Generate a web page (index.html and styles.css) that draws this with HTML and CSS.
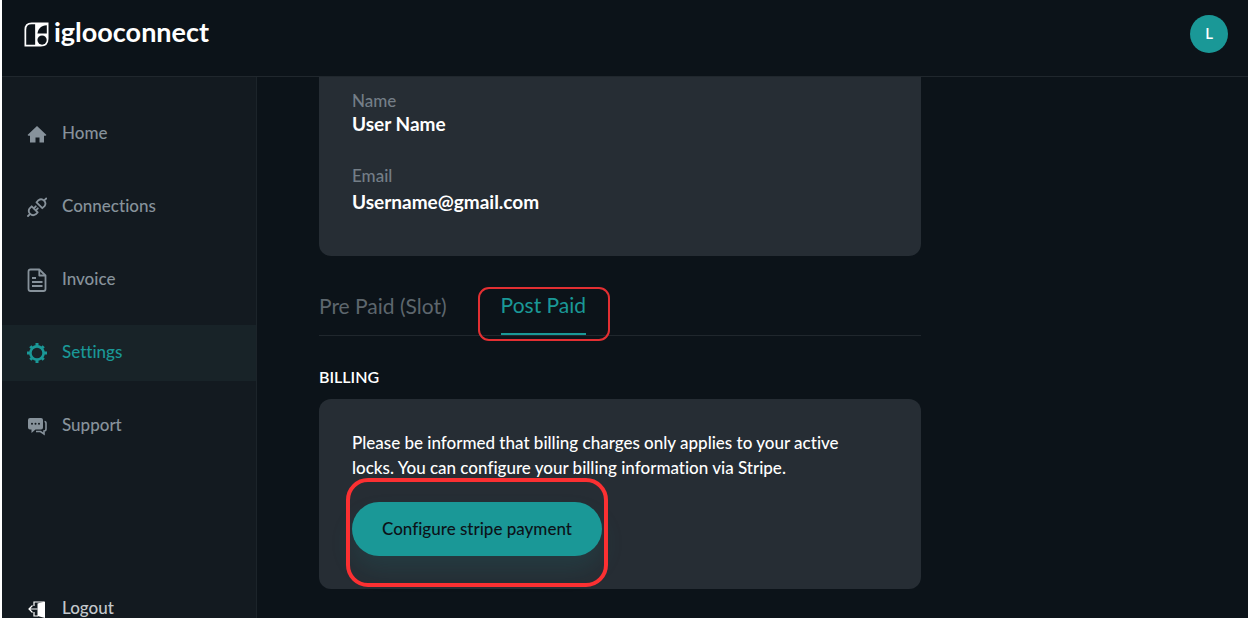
FILE: index.html
```html
<!DOCTYPE html>
<html lang="en">
<head>
<meta charset="utf-8">
<title>iglooconnect – Settings</title>
<link rel="stylesheet" href="styles.css">
</head>
<body>
<header class="topbar">
  <a class="brand" href="#">
    <svg class="brand-mark" viewBox="0 0 26 26" aria-hidden="true">
      <path d="M8 .5H25.500V17.500Q25.500 25.500 17.500 25.500H.5V8Q.5.5 8 .5z" fill="#fff"/>
      <path d="M8 2.300h3.600v21.400H2.300V8Q2.300 2.300 8 2.300z" fill="#0c1319"/>
      <path d="M23.700 3.400v8.600h-9.700C14.700 7 17.500 4 23.700 3.400z" fill="#0c1319"/>
      <circle cx="18.800" cy="18.800" r="4.800" fill="#0c1319"/>
    </svg>
    <span class="brand-name">iglooconnect</span>
  </a>
  <button class="avatar" type="button" aria-label="Account L">L</button>
</header>
<div class="layout">
  <nav class="sidebar" aria-label="Main">
    <a class="nav-item" href="#">
      <svg class="icon" viewBox="0 0 20 24" aria-hidden="true"><path d="M10 4 19.500 13l-1 .8H17V20.500h-4.500v-5h-4v5H3v-6.700H1.500L.5 13z" fill="currentColor"/></svg>
      <span>Home</span>
    </a>
    <a class="nav-item" href="#">
      <svg class="icon" viewBox="0 0 20 24" aria-hidden="true"><g fill="none" stroke="currentColor" stroke-width="1.800" stroke-linecap="round" stroke-linejoin="round"><path d="M9.500 7.300 11.500 5.200a4.300 4.300 0 0 1 6 6L15.300 13.200z"/><path d="m17.500 5.200 1.700-1.700"/><path d="M4.700 11.300 2.700 13.300a4.300 4.300 0 0 0 6 6l2-2z"/><path d="M2.700 19.300 1 21M6.800 13.300l2-2M8.800 15.300l2-2"/></g></svg>
      <span>Connections</span>
    </a>
    <a class="nav-item" href="#">
      <svg class="icon" viewBox="0 0 20 24" aria-hidden="true"><g fill="none" stroke="currentColor" stroke-width="1.800" stroke-linejoin="round"><path d="M3.500 1.500h8.800l6.200 6V21q0 2-2 2h-13q-2 0-2-2V3.500q0-2 2-2z"/><path d="M12.300 2v5.500H18M5 10h4M5 14h10.500M5 18h10.500"/></g></svg>
      <span>Invoice</span>
    </a>
    <a class="nav-item nav-item-active" href="#" aria-current="page">
      <svg class="icon" viewBox="0 0 20 24" aria-hidden="true"><circle cx="10" cy="12" r="6.600" fill="none" stroke="currentColor" stroke-width="2.600"/><path d="M10 2v3.200M10 18.800V22M0 12h3.200M16.800 12H20M3.300 5.300l2 2M14.700 16.700l2 2M16.700 5.300l-2 2M5.300 16.700l-2 2" fill="none" stroke="currentColor" stroke-width="3"/></svg>
      <span>Settings</span>
    </a>
    <a class="nav-item" href="#">
      <svg class="icon" viewBox="0 0 20 24" aria-hidden="true"><path d="M3 4h11q2 0 2 2v7.500q0 2-2 2H8.500L4.500 19v-3.500H3q-2 0-2-2V6q0-2 2-2z" fill="currentColor"/><path d="M17.500 7.500q1.500 0 1.500 2V15q0 2-2 2v3l-3.500-2.500H9" fill="none" stroke="currentColor" stroke-width="1.600"/><g fill="#131a20"><circle cx="5" cy="9.700" r="1"/><circle cx="8.500" cy="9.700" r="1"/><circle cx="12" cy="9.700" r="1"/></g></svg>
      <span>Support</span>
    </a>
    <a class="nav-item nav-item-logout" href="#">
      <svg class="icon" viewBox="0 0 20 24" aria-hidden="true"><path d="m10.500 6.500 7.500-2V21l-7.500-2z" fill="#fff"/><path d="M7 9V5h10M7 15v4h4M10.500 12H2.500M5.500 8.500 2 12l3.500 3.500" fill="none" stroke="#fff" stroke-width="1.200"/></svg>
      <span>Logout</span>
    </a>
  </nav>
  <main class="content">
    <section class="card profile" aria-label="Profile">
      <dl class="details">
        <div class="detail"><dt>Name</dt><dd>User Name</dd></div>
        <div class="detail detail-email"><dt>Email</dt><dd>Username@gmail.com</dd></div>
      </dl>
    </section>
    <div class="tabs" role="tablist">
      <button class="tab" type="button" role="tab" aria-selected="false">Pre Paid (Slot)</button>
      <button class="tab tab-active" type="button" role="tab" aria-selected="true">Post Paid</button>
    </div>
    <h2 class="section-title">BILLING</h2>
    <section class="card billing">
      <p class="billing-text">Please be informed that billing charges only applies to your active locks. You can configure your billing information via Stripe.</p>
      <button class="primary" type="button">Configure stripe payment</button>
    </section>
  </main>
</div>
</body>
</html>
```

FILE: styles.css
```css
* {
  box-sizing: border-box;
}

body {
  display: flex;
  flex-direction: column;
  height: 100vh;
  margin: 0;
  overflow: hidden;
  border-left: 2px solid #fff;
  background: #0c1319;
  color: #fff;
  font-family: Lato, "Open Sans", sans-serif;
  font-size: 17px;
  font-weight: 500;
  font-variant-ligatures: none;
}

a {
  color: inherit;
  text-decoration: none;
}

button {
  padding: 0;
  border: 0;
  background: none;
  color: inherit;
  font: inherit;
  font-variant-ligatures: none;
  cursor: pointer;
}

.topbar {
  display: flex;
  flex: none;
  align-items: center;
  justify-content: space-between;
  height: 77px;
  padding: 0 20px 8px 22px;
  border-bottom: 1px solid #20272d;
}

.brand {
  display: flex;
  align-items: center;
  gap: 5px;
}

.brand-mark {
  width: 25px;
  height: 25px;
}

.brand-name {
  padding-bottom: 4px;
  font-size: 27px;
  font-weight: 700;
  line-height: 32px;
}

.avatar {
  width: 38px;
  height: 38px;
  padding-bottom: 2px;
  border-radius: 50%;
  background: #1a9897;
  font-size: 15px;
  font-weight: 600;
}

.layout {
  display: flex;
  flex: 1;
  min-height: 0;
}

.sidebar {
  display: flex;
  flex: none;
  flex-direction: column;
  gap: 17px;
  width: 255px;
  padding-top: 29px;
  overflow: hidden;
  border-right: 1px solid #1c242a;
  background: #131a20;
}

.nav-item {
  display: flex;
  flex: none;
  align-items: center;
  gap: 15px;
  height: 56px;
  padding-left: 25px;
  color: #87929b;
}

.nav-item span {
  padding-bottom: 3px;
}

.nav-item-active {
  background: #182328;
  color: #1a9897;
}

.nav-item-logout {
  margin-top: 110px;
  color: #c3c8cc;
}

.icon {
  flex: none;
  width: 20px;
  height: 24px;
}

.content {
  flex: 1;
  min-width: 0;
  padding: 0 62px;
  overflow: hidden;
}

.card {
  max-width: 602px;
  padding: 31px 64px 33px 33px;
  border-radius: 12px;
  background: #262d34;
}

.profile {
  padding: 12px 33px 43px;
  border-radius: 0 0 12px 12px;
}

.details {
  display: flex;
  flex-direction: column;
  gap: 29px;
  margin: 0;
}

.detail {
  display: flex;
  flex-direction: column;
}

.detail dt {
  color: #747e87;
  line-height: 24px;
}

.detail dd {
  margin: 0;
  font-size: 19px;
  font-weight: 700;
  line-height: 22px;
}

.detail-email {
  gap: 3px;
}

.tabs {
  display: flex;
  gap: 54px;
  max-width: 602px;
  margin-top: 31px;
  border-bottom: 1px solid #20272d;
}

.tab {
  position: relative;
  height: 48px;
  padding-bottom: 12px;
  color: #5d666d;
  font-size: 21px;
  font-weight: 400;
}

.tab-active {
  border-bottom: 2px solid #1a9897;
  color: #1a9897;
}

.tab-active::after {
  position: absolute;
  inset: 0 -24px -8px -23px;
  border: 2px solid #e32f32;
  border-radius: 11px;
  content: "";
}

.section-title {
  margin: 29px 0 10px;
  font-size: 16px;
  font-weight: 600;
  line-height: 24px;
}

.billing-text {
  margin: 0 0 22px;
  line-height: 25px;
}

.primary {
  position: relative;
  height: 54px;
  padding: 0 30px 2px;
  border-radius: 27px;
  background: #1a9897;
  box-shadow: 0 14px 24px rgba(26, 152, 151, 0.14);
  color: #0c1319;
}

.primary::after {
  position: absolute;
  inset: -24px -6px -31px;
  border: 4px solid #fb3032;
  border-radius: 22px;
  content: "";
}
```
